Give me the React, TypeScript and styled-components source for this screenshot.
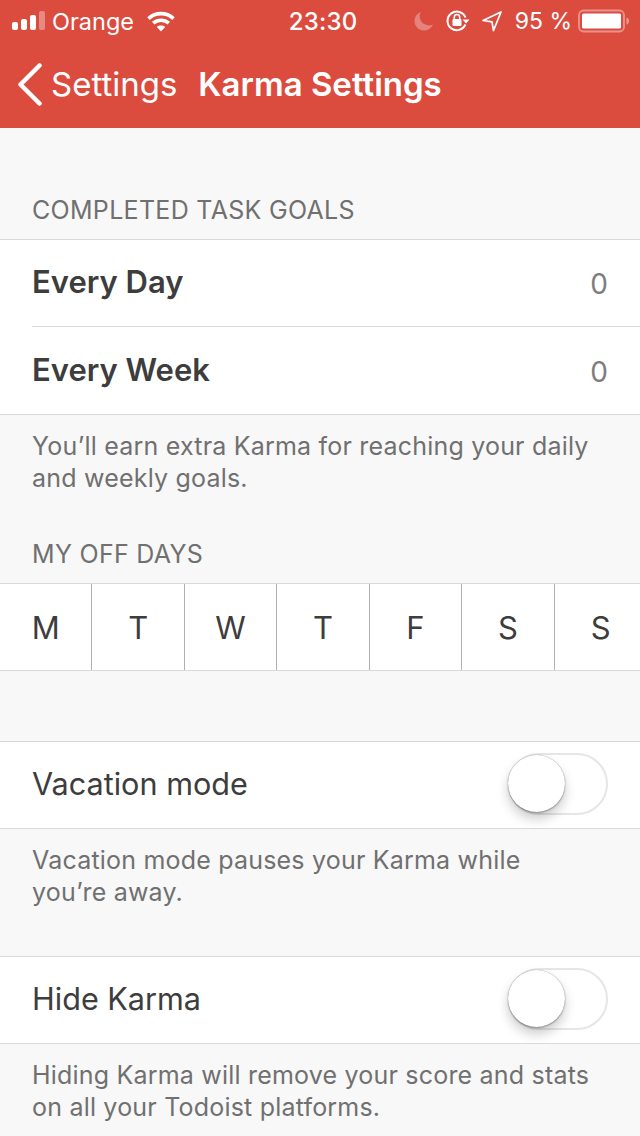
import React from "react";
import styled, { createGlobalStyle } from "styled-components";

const Global = createGlobalStyle`
  html, body {
    margin: 0;
    padding: 0;
    background: #f8f8f8;
  }
  body {
    font-family: Inter, "Noto Sans", "Liberation Sans", sans-serif;
    -webkit-font-smoothing: antialiased;
  }
`;

const Page = styled.div`
  width: 640px;
  height: 1136px;
  overflow: hidden;
  background: #f8f8f8;
`;

const Header = styled.header`
  height: 128px;
  background: #db4c3f;
  color: #fff;
`;

const StatusBar = styled.div`
  height: 40px;
  box-sizing: border-box;
  padding: 2px 10px 0 12px;
  display: flex;
  align-items: center;
  justify-content: space-between;
  font-size: 23.500px;
`;

const StatusLeft = styled.div`
  display: flex;
  align-items: center;
  width: 218px;
`;

const StatusRight = styled.div`
  display: flex;
  align-items: center;
  justify-content: flex-end;
  width: 214px;
`;

const Carrier = styled.span`
  margin: 0 13px 0 6px;
  font-weight: 400;
`;

const Clock = styled.span`
  font-size: 24px;
  font-weight: 500;
  letter-spacing: 0.2px;
`;

const Percent = styled.span`
  margin: 0 6px 0 13px;
  font-size: 23px;
  white-space: nowrap;
`;

const StatusIcon = styled.svg<{ $after?: number }>`
  display: block;
  flex: none;
  margin-right: ${(p) => p.$after ?? 0}px;
`;

const NavBar = styled.nav`
  height: 88px;
  display: flex;
  align-items: center;
  padding: 0 0 0 17px;
  font-size: 33px;
`;

const BackLabel = styled.span`
  margin: 0 21px 0 9px;
  font-weight: 400;
`;

const NavTitle = styled.span`
  font-weight: 600;
`;

const SectionLabel = styled.div<{ $top: number }>`
  margin-top: ${(p) => p.$top}px;
  margin-bottom: 15px;
  padding: 0 32px;
  height: 28px;
  line-height: 28px;
  font-size: 25px;
  letter-spacing: 0.3px;
  color: #707070;
`;

const Group = styled.div<{ $top?: number }>`
  margin-top: ${(p) => p.$top ?? 0}px;
  background: #fff;
  border-top: 1px solid #d9d9d9;
  border-bottom: 1px solid #d9d9d9;
`;

const Row = styled.div<{ $height?: number }>`
  height: ${(p) => p.$height ?? 86}px;
  display: flex;
  align-items: center;
  justify-content: space-between;
  padding: 0 32px;
  font-size: 30.600px;
  color: #3d3d3d;
`;

const Divider = styled.div`
  height: 1px;
  margin-left: 32px;
  background: #d9d9d9;
`;

const GoalName = styled.span`
  padding-bottom: 3px;
  font-size: 31px;
  font-weight: 600;
`;

const GoalValue = styled.span`
  padding-top: 2px;
  color: #7d7d7d;
  font-size: 28px;
`;

const ToggleLabel = styled.span`
  padding-bottom: 4px;
`;

const Note = styled.p`
  margin: 15px 0 0;
  padding: 0 32px;
  font-size: 25px;
  letter-spacing: 0.2px;
  line-height: 32px;
  color: #707070;
`;

const Days = styled.div`
  display: grid;
  grid-template-columns: repeat(7, 92.43px);
  height: 86px;
  overflow: hidden;
`;

const Day = styled.div`
  display: flex;
  align-items: center;
  justify-content: center;
  font-size: 31px;
  color: #3d3d3d;
  border-right: 1px solid #b0b0b0;
  &:last-child {
    border-right: 0;
  }
`;

const Track = styled.div`
  position: relative;
  box-sizing: border-box;
  width: 100px;
  height: 62px;
  margin-bottom: 3px;
  border: 2.500px solid #e6e6e6;
  border-radius: 31px;
  background: #fff;
`;

const Knob = styled.div`
  position: absolute;
  left: -2px;
  top: 0;
  width: 57px;
  height: 57px;
  border-radius: 50%;
  background: #fff;
  box-shadow: 0 7px 12px rgba(0, 0, 0, 0.2), 0 1px 2px rgba(0, 0, 0, 0.3), 0 0 1px rgba(0, 0, 0, 0.4);
`;

const Toggle = () => (
  <Track>
    <Knob />
  </Track>
);

const Signal = () => (
  <StatusIcon width="34" height="20" viewBox="0 0 34 20" fill="#fff">
    <rect x="0" y="11" width="6" height="8" rx="2" />
    <rect x="9" y="8" width="6" height="11" rx="2" />
    <rect x="18" y="4" width="6" height="15" rx="2" />
    <rect x="27" y="0" width="6" height="19" rx="2" opacity="0.35" />
  </StatusIcon>
);

const Wifi = () => (
  <StatusIcon width="28" height="21" viewBox="0 0 28 21" fill="none" stroke="#fff" strokeWidth="3.600">
    <path d="M1.500 7.600C8.600 1 19.400 1 26.500 7.600" />
    <path d="M6.200 12.200C10.600 8.200 17.400 8.200 21.800 12.200" />
    <path d="M14 20.500L9.800 15.900C12.200 14 15.800 14 18.200 15.900Z" fill="#fff" stroke="none" />
  </StatusIcon>
);

const Moon = () => (
  <StatusIcon $after={12} width="20" height="20" viewBox="0 0 20 20" fill="#fff" opacity="0.3">
    <path d="M7 1C3 2.600 0.500 6 0.500 10c0 5.300 4.200 9.500 9.500 9.500 4 0 7.500-2.400 9-6-1.300 .6-2.600.9-4 .9-5.300 0-9.300-4-9.300-9.300C5.700 3.600 6.100 2.200 7 1Z" />
  </StatusIcon>
);

const RotationLock = () => (
  <StatusIcon $after={12} width="24" height="22" viewBox="0 0 24 22" fill="none">
    <path d="M19.400 14.500A9.300 9.300 0 1 1 19.500 7.500" stroke="#fff" strokeWidth="2" />
    <path d="M16.500 9.500h7l-3.500 4z" fill="#fff" />
    <rect x="6.500" y="9" width="9" height="7" rx="1" fill="#fff" />
    <path d="M8.300 9V7.200a2.700 2.700 0 0 1 5.400 0V9" stroke="#fff" strokeWidth="1.500" />
  </StatusIcon>
);

const Location = () => (
  <StatusIcon width="20" height="21" viewBox="0 0 20 21" fill="none">
    <path d="M1 9.500L19 1L11.500 19.500L10 10.800Z" stroke="#fff" strokeWidth="1.700" strokeLinejoin="round" />
  </StatusIcon>
);

const Battery = () => (
  <StatusIcon width="52" height="24" viewBox="0 0 52 24">
    <rect x="1" y="1.500" width="45" height="21" rx="4.500" fill="none" stroke="#fff" strokeOpacity="0.4" strokeWidth="1.800" />
    <rect x="4" y="4.500" width="39" height="15" rx="1.500" fill="#fff" />
    <path d="M48.500 8.500c1.600.5 2.500 1.900 2.500 3.500s-.9 3-2.500 3.500z" fill="#fff" fillOpacity="0.45" />
  </StatusIcon>
);

const BackChevron = () => (
  <StatusIcon width="25" height="43" viewBox="0 0 25 43" fill="none">
    <path d="M22.500 2.500L3.500 21.500L22.500 40.500" stroke="#fff" strokeWidth="4.500" strokeLinecap="round" strokeLinejoin="round" />
  </StatusIcon>
);

const days = ["M", "T", "W", "T", "F", "S", "S"];

const App = () => (
  <Page>
    <Global />
    <Header>
      <StatusBar>
        <StatusLeft>
          <Signal />
          <Carrier>Orange</Carrier>
          <Wifi />
        </StatusLeft>
        <Clock>23:30</Clock>
        <StatusRight>
          <Moon />
          <RotationLock />
          <Location />
          <Percent>95 %</Percent>
          <Battery />
        </StatusRight>
      </StatusBar>
      <NavBar>
        <BackChevron />
        <BackLabel>Settings</BackLabel>
        <NavTitle>Karma Settings</NavTitle>
      </NavBar>
    </Header>

    <SectionLabel $top={68}>COMPLETED TASK GOALS</SectionLabel>
    <Group>
      <Row>
        <GoalName>Every Day</GoalName>
        <GoalValue>0</GoalValue>
      </Row>
      <Divider />
      <Row $height={87}>
        <GoalName>Every Week</GoalName>
        <GoalValue>0</GoalValue>
      </Row>
    </Group>
    <Note>
      You’ll earn extra Karma for reaching your daily
      <br />
      and weekly goals.
    </Note>

    <SectionLabel $top={46}>MY OFF DAYS</SectionLabel>
    <Group>
      <Days>
        {days.map((d, i) => (
          <Day key={i}>{d}</Day>
        ))}
      </Days>
    </Group>

    <Group $top={70}>
      <Row>
        <ToggleLabel>Vacation mode</ToggleLabel>
        <Toggle />
      </Row>
    </Group>
    <Note>
      Vacation mode pauses your Karma while
      <br />
      you’re away.
    </Note>

    <Group $top={48}>
      <Row>
        <ToggleLabel>Hide Karma</ToggleLabel>
        <Toggle />
      </Row>
    </Group>
    <Note>
      Hiding Karma will remove your score and stats
      <br />
      on all your Todoist platforms.
    </Note>
  </Page>
);

export default App;
